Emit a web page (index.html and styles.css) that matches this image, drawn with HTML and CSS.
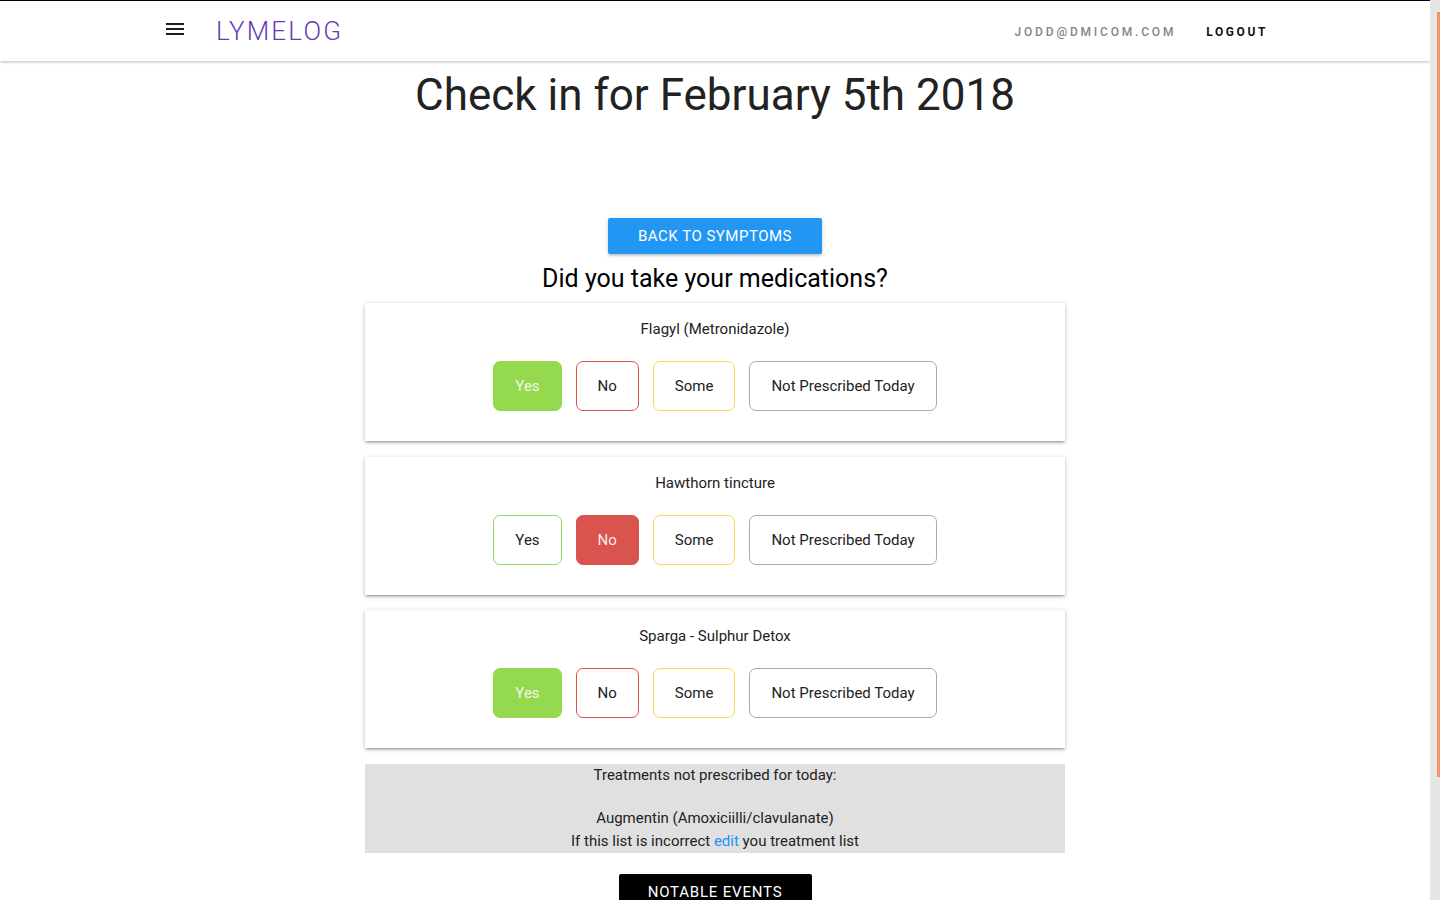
FILE: index.html
```html
<!DOCTYPE html>
<html lang="en">
<head>
<meta charset="utf-8">
<title>Lymelog - Check in</title>
<link rel="stylesheet" href="styles.css">
</head>
<body>
<div class="window">
  <div class="page">
    <header class="topbar">
      <div class="topbar-left">
        <button class="menu-btn" aria-label="Menu">
          <svg width="18" height="12" viewBox="0 0 18 12"><rect x="0" y="0" width="18" height="2" fill="#1c1c28"/><rect x="0" y="5" width="18" height="2" fill="#1c1c28"/><rect x="0" y="10" width="18" height="2" fill="#1c1c28"/></svg>
        </button>
        <span class="brand">LYMELOG</span>
      </div>
      <nav class="topbar-right">
        <span class="user">JODD@DMICOM.COM</span>
        <span class="logout">LOGOUT</span>
      </nav>
    </header>

    <main class="content">
      <h1 class="title">Check in for February 5th 2018</h1>
      <button class="btn-back">BACK TO SYMPTOMS</button>
      <h2 class="question">Did you take your medications?</h2>

      <section class="card">
        <div class="med-name">Flagyl (Metronidazole)</div>
        <div class="choices">
          <button class="choice yes filled">Yes</button>
          <button class="choice no">No</button>
          <button class="choice some">Some</button>
          <button class="choice np">Not Prescribed Today</button>
        </div>
      </section>

      <section class="card">
        <div class="med-name">Hawthorn tincture</div>
        <div class="choices">
          <button class="choice yes">Yes</button>
          <button class="choice no filled">No</button>
          <button class="choice some">Some</button>
          <button class="choice np">Not Prescribed Today</button>
        </div>
      </section>

      <section class="card">
        <div class="med-name">Sparga - Sulphur Detox</div>
        <div class="choices">
          <button class="choice yes filled">Yes</button>
          <button class="choice no">No</button>
          <button class="choice some">Some</button>
          <button class="choice np">Not Prescribed Today</button>
        </div>
      </section>

      <div class="not-prescribed">
        <div class="np-line">Treatments not prescribed for today:</div>
        <div class="blank"></div>
        <div class="np-line">Augmentin (Amoxiciilli/clavulanate)</div>
        <div class="np-line">If this list is incorrect <a href="#" class="link">edit</a> you treatment list</div>
      </div>

      <button class="btn-events">NOTABLE EVENTS</button>
    </main>
  </div>
  <div class="scrollbar"><div class="thumb"></div></div>
</div>
</body>
</html>
```

FILE: styles.css
```css
html, body {
  margin: 0;
  padding: 0;
  height: 100%;
  overflow: hidden;
  background: #fff;
  font-family: Roboto, "Noto Sans", Arial, sans-serif;
  color: #222;
}

.window {
  display: flex;
  height: 900px;
}

.page {
  flex: 1;
  border-top: 1px solid #000;
  overflow: hidden;
}

.topbar {
  height: 60px;
  display: flex;
  align-items: center;
  justify-content: space-between;
  background: #fff;
  box-shadow: 0 1px 3px rgba(0,0,0,0.28);
  position: relative;
  z-index: 1;
}

.topbar-left {
  display: flex;
  align-items: center;
  padding-left: 166px;
}

.menu-btn {
  border: 0;
  background: none;
  padding: 0;
  width: 18px;
  height: 12px;
  display: flex;
  margin-top: -4px;
}

.brand {
  margin-left: 32px;
  font-size: 26px;
  font-weight: 300;
  letter-spacing: 2.2px;
  color: #673ab7;
}

.topbar-right {
  display: flex;
  align-items: center;
  padding: 2px 162px 0 0;
  gap: 30px;
}

.user {
  font-size: 12px;
  font-weight: 500;
  letter-spacing: 2.8px;
  color: #858585;
}

.logout {
  font-size: 12px;
  font-weight: 700;
  letter-spacing: 2.6px;
  color: #111;
}

.content {
  display: flex;
  flex-direction: column;
  align-items: center;
}

.title {
  margin: 4px 0 93px;
  font-size: 44px;
  line-height: 60px;
  font-weight: 400;
  color: #222;
}

.btn-back {
  width: 214px;
  height: 36px;
  border: 0;
  border-radius: 2px;
  background: #2196f3;
  color: #fff;
  font-family: inherit;
  font-size: 15px;
  letter-spacing: 0.5px;
  box-shadow: 0 2px 2px 0 rgba(0,0,0,0.14), 0 1px 5px 0 rgba(0,0,0,0.12);
}

.question {
  margin: 11px 0 10px;
  font-size: 25px;
  line-height: 28px;
  font-weight: 400;
  color: #000;
}

.card {
  width: 700px;
  box-sizing: border-box;
  padding: 15px 0 30px;
  margin-bottom: 15.5px;
  background: #fff;
  box-shadow: 0 2px 2px 0 rgba(0,0,0,0.14), 0 3px 1px -2px rgba(0,0,0,0.12), 0 1px 5px 0 rgba(0,0,0,0.2);
  display: flex;
  flex-direction: column;
  align-items: center;
}

.med-name {
  font-size: 15px;
  line-height: 22px;
  color: #222;
}

.choices {
  margin-top: 21px;
  display: flex;
  gap: 14px;
}

.choice {
  box-sizing: border-box;
  height: 50px;
  padding: 0 21px;
  background: #fff;
  border: 1px solid #aaa;
  border-radius: 7px;
  font-family: inherit;
  font-size: 15px;
  color: #222;
}

.choice.yes { border-color: #95d95a; }
.choice.no { border-color: #d9534f; }
.choice.some { border-color: #fcd45b; }
.choice.np { border-color: #aaa; }

.choice.yes.filled {
  background: #95d94f;
  border-color: #95d94f;
  color: #f0f8e8;
}

.choice.no.filled {
  background: #d9534f;
  border-color: #d9534f;
  color: #fbecec;
}

.not-prescribed {
  width: 700px;
  background: #e0e0e0;
  text-align: center;
  font-size: 15px;
  line-height: 23px;
  color: #222;
  margin-bottom: 21px;
}

.blank {
  height: 20px;
}

.link {
  color: #2196f3;
  text-decoration: none;
}

.btn-events {
  width: 193px;
  height: 36px;
  border: 0;
  border-radius: 2px;
  background: #000;
  color: #fff;
  font-family: inherit;
  font-size: 15px;
  letter-spacing: 0.8px;
}

.scrollbar {
  width: 10px;
  flex: 0 0 10px;
  background: #e6e6e6;
}

.thumb {
  margin: 12px 0 0 7px;
  width: 3px;
  height: 765px;
  background: #f0956a;
}
```
